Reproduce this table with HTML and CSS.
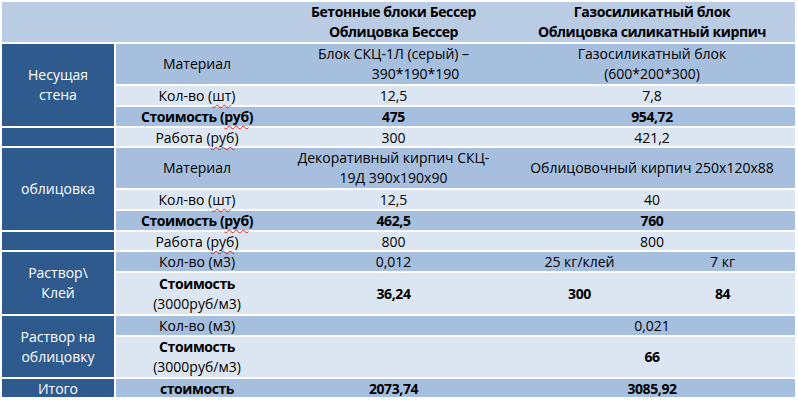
FILE: index.html
```html
<!DOCTYPE html>
<html lang="ru">
<head>
<meta charset="utf-8">
<title>Сравнение</title>
<link rel="stylesheet" href="styles.css">
</head>
<body>
<table class="cmp">
  <colgroup>
    <col class="c1"><col class="c2"><col class="c3"><col class="c4a"><col class="c4b">
  </colgroup>
  <tr class="hd">
    <td></td>
    <td></td>
    <td>Бетонные блоки Бессер<br>Облицовка Бессер</td>
    <td colspan="2">Газосиликатный блок<br>Облицовка силикатный кирпич</td>
  </tr>
  <tr class="band tall">
    <th rowspan="3">Несущая<br>стена</th>
    <td>Материал</td>
    <td>Блок СКЦ-1Л (серый) –<span class="shift">390*190*190</span></td>
    <td colspan="2">Газосиликатный блок<br>(600*200*300)</td>
  </tr>
  <tr class="lite row">
    <td>Кол-во (<span class="sp">шт</span>)</td>
    <td>12,5</td>
    <td colspan="2">7,8</td>
  </tr>
  <tr class="band row bold">
    <td>Стоимость (<span class="sp">руб</span>)</td>
    <td>475</td>
    <td colspan="2">954,72</td>
  </tr>
  <tr class="lite work">
    <th></th>
    <td>Работа (<span class="sp">руб</span>)</td>
    <td>300</td>
    <td colspan="2">421,2</td>
  </tr>
  <tr class="band tall">
    <th rowspan="3">облицовка</th>
    <td>Материал</td>
    <td>Декоративный кирпич СКЦ-<br>19Д 390х190х90</td>
    <td colspan="2">Облицовочный кирпич 250х120х88</td>
  </tr>
  <tr class="lite row">
    <td>Кол-во (<span class="sp">шт</span>)</td>
    <td>12,5</td>
    <td colspan="2">40</td>
  </tr>
  <tr class="band row bold">
    <td>Стоимость (<span class="sp">руб</span>)</td>
    <td>462,5</td>
    <td colspan="2">760</td>
  </tr>
  <tr class="lite work">
    <th></th>
    <td>Работа (<span class="sp">руб</span>)</td>
    <td>800</td>
    <td colspan="2">800</td>
  </tr>
  <tr class="band row">
    <th rowspan="2">Раствор\<br>Клей</th>
    <td>Кол-во (м3)</td>
    <td>0,012</td>
    <td>25 кг/клей</td>
    <td>7 кг</td>
  </tr>
  <tr class="lite tall tall-x">
    <td><b>Стоимость</b><br>(3000руб/м3)</td>
    <td class="strong">36,24</td>
    <td class="strong">300</td>
    <td class="strong">84</td>
  </tr>
  <tr class="band row">
    <th rowspan="2">Раствор на<br>облицовку</th>
    <td>Кол-во (м3)</td>
    <td></td>
    <td colspan="2">0,021</td>
  </tr>
  <tr class="lite tall">
    <td><b>Стоимость</b><br>(3000руб/м3)</td>
    <td></td>
    <td colspan="2" class="strong">66</td>
  </tr>
  <tr class="band total bold">
    <th>Итого</th>
    <td>стоимость</td>
    <td>2073,74</td>
    <td colspan="2">3085,92</td>
  </tr>
</table>
</body>
</html>
```

FILE: styles.css
```css
html, body {
  margin: 0;
  background: #ffffff;
}
body {
  padding: 2px;
  font-family: "Open Sans", "Noto Sans", sans-serif;
  font-size: 14px;
  color: #000;
}
.cmp {
  border-collapse: separate;
  border-spacing: 0;
  table-layout: fixed;
  width: 793px;
}
.c1 { width: 114px; }
.c2 { width: 162px; }
.c3 { width: 231px; }
.c4a { width: 141px; }
.c4b { width: 145px; }

.cmp td,
.cmp th {
  box-sizing: border-box;
  padding: 0;
  text-align: center;
  vertical-align: middle;
  line-height: 17px;
  border-top: 2px solid #fff;
  white-space: nowrap;
}
.cmp th {
  background: #2f5a8d;
  color: #fff;
  font-weight: normal;
  border-right: 2px solid #fff;
}
.cmp .tall td,
.cmp th[rowspan] {
  line-height: 20px;
}
.cmp .hd td {
  border-top: 0;
  background: #b9cce4;
  font-weight: bold;
  line-height: 20px;
}
.hd { height: 40px; }
.tall { height: 42px; }
.tall-x { height: 43px; }
.row { height: 21px; }
.work { height: 20px; }
.total { height: 20px; }

.band td { background: #a7bfde; }
.lite td { background: #dce6f2; }
.bold td, .strong, .hd td, b {
  font-weight: bold;
  letter-spacing: -0.4px;
}

.shift {
  display: block;
  padding-left: 44px;
}
.sp {
  text-decoration: underline wavy #e02020;
  text-decoration-thickness: 1px;
  text-underline-offset: 3px;
  text-decoration-skip-ink: none;
}
```
